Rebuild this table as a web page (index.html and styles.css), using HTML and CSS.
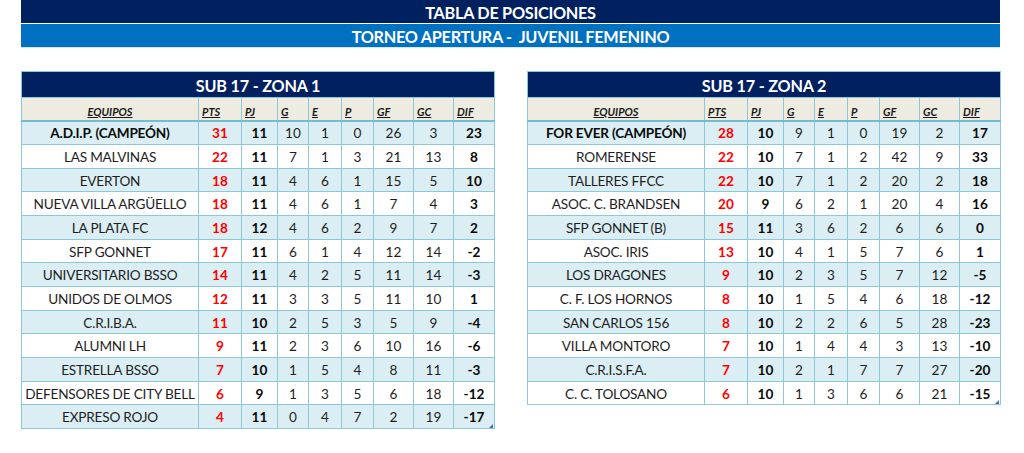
FILE: index.html
```html
<!DOCTYPE html>
<html lang="es">
<head>
<meta charset="utf-8">
<title>Tabla de posiciones</title>
<link rel="stylesheet" href="styles.css">
</head>
<body>
<div class="page">
  <header class="banner">
    <div class="banner-top">TABLA DE POSICIONES</div>
    <div class="banner-sub">TORNEO APERTURA -&nbsp; JUVENIL FEMENINO</div>
  </header>
  <div class="zones">
    <div class="zone">
      <table class="standings">
        <colgroup>
          <col class="c-team"><col class="c-pts"><col class="c-pj"><col class="c-g"><col class="c-e"><col class="c-p"><col class="c-gf"><col class="c-gc"><col class="c-dif">
        </colgroup>
        <thead>
          <tr class="title"><th colspan="9">SUB 17 - ZONA 1</th></tr>
          <tr class="labels"><th class="lab-team">EQUIPOS</th><th>PTS</th><th>PJ</th><th>G</th><th>E</th><th>P</th><th>GF</th><th>GC</th><th>DIF</th></tr>
        </thead>
        <tbody>
          <tr class="champ"><td class="team">A.D.I.P. (CAMPEÓN)</td><td class="pts">31</td><td class="pj">11</td><td>10</td><td>1</td><td>0</td><td>26</td><td>3</td><td class="dif">23</td></tr>
          <tr><td class="team">LAS MALVINAS</td><td class="pts">22</td><td class="pj">11</td><td>7</td><td>1</td><td>3</td><td>21</td><td>13</td><td class="dif">8</td></tr>
          <tr><td class="team">EVERTON</td><td class="pts">18</td><td class="pj">11</td><td>4</td><td>6</td><td>1</td><td>15</td><td>5</td><td class="dif">10</td></tr>
          <tr><td class="team">NUEVA VILLA ARGÜELLO</td><td class="pts">18</td><td class="pj">11</td><td>4</td><td>6</td><td>1</td><td>7</td><td>4</td><td class="dif">3</td></tr>
          <tr><td class="team">LA PLATA FC</td><td class="pts">18</td><td class="pj">12</td><td>4</td><td>6</td><td>2</td><td>9</td><td>7</td><td class="dif">2</td></tr>
          <tr><td class="team">SFP GONNET</td><td class="pts">17</td><td class="pj">11</td><td>6</td><td>1</td><td>4</td><td>12</td><td>14</td><td class="dif">-2</td></tr>
          <tr><td class="team">UNIVERSITARIO BSSO</td><td class="pts">14</td><td class="pj">11</td><td>4</td><td>2</td><td>5</td><td>11</td><td>14</td><td class="dif">-3</td></tr>
          <tr><td class="team">UNIDOS DE OLMOS</td><td class="pts">12</td><td class="pj">11</td><td>3</td><td>3</td><td>5</td><td>11</td><td>10</td><td class="dif">1</td></tr>
          <tr><td class="team">C.R.I.B.A.</td><td class="pts">11</td><td class="pj">10</td><td>2</td><td>5</td><td>3</td><td>5</td><td>9</td><td class="dif">-4</td></tr>
          <tr><td class="team">ALUMNI LH</td><td class="pts">9</td><td class="pj">11</td><td>2</td><td>3</td><td>6</td><td>10</td><td>16</td><td class="dif">-6</td></tr>
          <tr><td class="team">ESTRELLA BSSO</td><td class="pts">7</td><td class="pj">10</td><td>1</td><td>5</td><td>4</td><td>8</td><td>11</td><td class="dif">-3</td></tr>
          <tr><td class="team">DEFENSORES DE CITY BELL</td><td class="pts">6</td><td class="pj">9</td><td>1</td><td>3</td><td>5</td><td>6</td><td>18</td><td class="dif">-12</td></tr>
          <tr><td class="team">EXPRESO ROJO</td><td class="pts">4</td><td class="pj">11</td><td>0</td><td>4</td><td>7</td><td>2</td><td>19</td><td class="dif">-17</td></tr>
        </tbody>
      </table>
    </div>
    <div class="zone">
      <table class="standings">
        <colgroup>
          <col class="c-team"><col class="c-pts"><col class="c-pj"><col class="c-g"><col class="c-e"><col class="c-p"><col class="c-gf"><col class="c-gc"><col class="c-dif">
        </colgroup>
        <thead>
          <tr class="title"><th colspan="9">SUB 17 - ZONA 2</th></tr>
          <tr class="labels"><th class="lab-team">EQUIPOS</th><th>PTS</th><th>PJ</th><th>G</th><th>E</th><th>P</th><th>GF</th><th>GC</th><th>DIF</th></tr>
        </thead>
        <tbody>
          <tr class="champ"><td class="team">FOR EVER (CAMPEÓN)</td><td class="pts">28</td><td class="pj">10</td><td>9</td><td>1</td><td>0</td><td>19</td><td>2</td><td class="dif">17</td></tr>
          <tr><td class="team">ROMERENSE</td><td class="pts">22</td><td class="pj">10</td><td>7</td><td>1</td><td>2</td><td>42</td><td>9</td><td class="dif">33</td></tr>
          <tr><td class="team">TALLERES FFCC</td><td class="pts">22</td><td class="pj">10</td><td>7</td><td>1</td><td>2</td><td>20</td><td>2</td><td class="dif">18</td></tr>
          <tr><td class="team">ASOC. C. BRANDSEN</td><td class="pts">20</td><td class="pj">9</td><td>6</td><td>2</td><td>1</td><td>20</td><td>4</td><td class="dif">16</td></tr>
          <tr><td class="team">SFP GONNET (B)</td><td class="pts">15</td><td class="pj">11</td><td>3</td><td>6</td><td>2</td><td>6</td><td>6</td><td class="dif">0</td></tr>
          <tr><td class="team">ASOC. IRIS</td><td class="pts">13</td><td class="pj">10</td><td>4</td><td>1</td><td>5</td><td>7</td><td>6</td><td class="dif">1</td></tr>
          <tr><td class="team">LOS DRAGONES</td><td class="pts">9</td><td class="pj">10</td><td>2</td><td>3</td><td>5</td><td>7</td><td>12</td><td class="dif">-5</td></tr>
          <tr><td class="team">C. F. LOS HORNOS</td><td class="pts">8</td><td class="pj">10</td><td>1</td><td>5</td><td>4</td><td>6</td><td>18</td><td class="dif">-12</td></tr>
          <tr><td class="team">SAN CARLOS 156</td><td class="pts">8</td><td class="pj">10</td><td>2</td><td>2</td><td>6</td><td>5</td><td>28</td><td class="dif">-23</td></tr>
          <tr><td class="team">VILLA MONTORO</td><td class="pts">7</td><td class="pj">10</td><td>1</td><td>4</td><td>4</td><td>3</td><td>13</td><td class="dif">-10</td></tr>
          <tr><td class="team">C.R.I.S.F.A.</td><td class="pts">7</td><td class="pj">10</td><td>2</td><td>1</td><td>7</td><td>7</td><td>27</td><td class="dif">-20</td></tr>
          <tr><td class="team">C. C. TOLOSANO</td><td class="pts">6</td><td class="pj">10</td><td>1</td><td>3</td><td>6</td><td>6</td><td>21</td><td class="dif">-15</td></tr>
        </tbody>
      </table>
    </div>
  </div>
</div>
</body>
</html>
```

FILE: styles.css
```css
html, body {
  margin: 0;
  padding: 0;
  background: #ffffff;
}

body {
  font-family: Lato, "Open Sans", "Liberation Sans", sans-serif;
  color: #141414;
  width: 1024px;
  height: 453px;
  overflow: hidden;
}

.page {
  padding-left: 21px;
  width: 979px;
}

.banner {
  display: flex;
  flex-direction: column;
}

.banner-top {
  height: 23px;
  line-height: 25px;
  background: #002060;
  color: #ffffff;
  font-weight: 700;
  font-size: 16.3px;
  text-align: center;
  letter-spacing: -0.3px;
}

.banner-sub {
  height: 23px;
  line-height: 25px;
  margin-top: 1px;
  background: #0070c0;
  color: #ffffff;
  font-weight: 700;
  font-size: 16.3px;
  text-align: center;
  letter-spacing: -0.3px;
  border-bottom: 1px solid #d6e6f2;
}

.zones {
  display: flex;
  align-items: flex-start;
  gap: 33px;
  margin-top: 23px;
}

.zone {
  position: relative;
  width: 473px;
}

.zone::after {
  content: "";
  position: absolute;
  right: 1px;
  bottom: 1px;
  width: 0;
  height: 0;
  border-left: 4px solid transparent;
  border-bottom: 4px solid #3a6fc4;
}

.standings {
  width: 473px;
  border-collapse: collapse;
  table-layout: fixed;
  border: 1px solid #8cc8da;
}

.c-team { width: 177px; }
.c-pts { width: 43px; }
.c-pj { width: 36px; }
.c-g { width: 31px; }
.c-e { width: 33px; }
.c-p { width: 32px; }
.c-gf { width: 40px; }
.c-gc { width: 40px; }
.c-dif { width: 41px; }

.title th {
  height: 24px;
  padding: 1px 0 0;
  background: #002060;
  color: #ffffff;
  font-size: 16.2px;
  font-weight: 700;
  text-align: center;
  letter-spacing: -0.2px;
  border-bottom: 1px solid #8cc8da;
}

.labels th {
  height: 23px;
  padding: 5px 0 0 3px;
  background: #eeece1;
  color: #1a1a1a;
  font-size: 11px;
  font-weight: 700;
  font-style: italic;
  text-decoration: underline;
  text-align: left;
  border-left: 1px solid #8cc8da;
  border-bottom: 2px solid #74bcd2;
  box-sizing: border-box;
}

.labels th.lab-team {
  text-align: center;
  padding-left: 0;
}

tbody td {
  height: 21.67px;
  padding: 1px 0 0;
  text-align: center;
  font-size: 13.6px;
  color: #1e1e1e;
  border-left: 1px solid #8cc8da;
  border-bottom: 1px solid #8cc8da;
  white-space: nowrap;
}

tbody tr:nth-child(odd) td {
  background: #daeef3;
}

tbody tr:nth-child(even) td {
  background: #ffffff;
}

td.team {
  letter-spacing: -0.2px;
}

td.pts {
  color: #ff0000;
  font-weight: 700;
}

td.pj,
td.dif {
  color: #0a0a0a;
  font-weight: 700;
}

tr.champ td.team {
  font-weight: 700;
  color: #0a0a0a;
}
```
